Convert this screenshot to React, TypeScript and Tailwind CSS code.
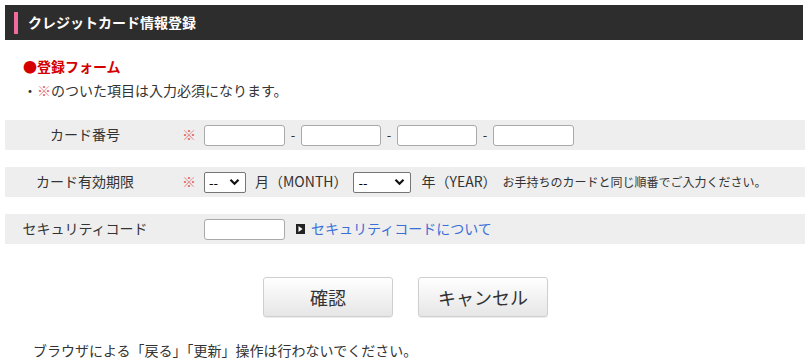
import React from "react";

const font = { fontFamily: '"Noto Sans CJK JP", "Noto Sans", sans-serif' };

function CardInput({ w = "w-[81px]" }: { w?: string }) {
  return (
    <input
      type="text"
      className={`${w} h-[21px] border border-[#a9a9a9] rounded-[3px] bg-white px-1 text-[13px] outline-none`}
    />
  );
}

function Dash() {
  return <span className="w-[16px] text-center text-[13px] text-[#333]">-</span>;
}

function Select({ w }: { w: string }) {
  return (
    <div
      className={`${w} h-[21px] border border-[#767676] rounded-[2px] bg-white flex items-center justify-between pl-[4px] pr-[5px]`}
    >
      <span className="text-[13px] leading-none text-black">--</span>
      <svg width="11" height="8" viewBox="0 0 11 8">
        <path d="M1.5 1.8 L5.5 5.8 L9.5 1.8" fill="none" stroke="#111" strokeWidth="2.2" />
      </svg>
    </div>
  );
}

function Row({ label, required, children }: { label: string; required?: boolean; children: React.ReactNode }) {
  return (
    <div className="flex items-center h-[30px] bg-[#eeeeee] text-[14px] text-[#333]">
      <div className="w-[160px] text-center">{label}</div>
      <div className="w-[39px] pl-[17px] text-[#e06666]">{required ? "※" : ""}</div>
      <div className="flex items-center">{children}</div>
    </div>
  );
}

export default function App() {
  return (
    <div className="w-[806px] h-[364px] bg-white p-[5px] pr-[3px] leading-[1.4]" style={font}>
      <header className="h-[35px] bg-[#2d2d2d] flex items-center pl-[9px]">
        <span className="w-[4px] h-[22px] bg-[#f06ba0]" />
        <h1 className="ml-[10px] text-[14px] font-bold text-white">クレジットカード情報登録</h1>
      </header>

      <div className="pl-[18px] pt-[17px]">
        <div className="text-[14px] font-bold text-[#d40000]">●登録フォーム</div>
        <div className="mt-[4px] text-[14px] text-[#333]">
          ・<span className="text-[#e06666]">※</span>のついた項目は入力必須になります。
        </div>
      </div>

      <div className="mt-[20px] flex flex-col gap-[17px] w-[800px]">
        <Row label="カード番号" required>
          <CardInput />
          <Dash />
          <CardInput w="w-[80px]" />
          <Dash />
          <CardInput w="w-[80px]" />
          <Dash />
          <CardInput />
        </Row>
        <Row label="カード有効期限" required>
          <Select w="w-[42px]" />
          <span className="ml-[9px]">月（MONTH）</span>
          <div className="ml-[6px]">
            <Select w="w-[58px]" />
          </div>
          <span className="ml-[10px]">年（YEAR）</span>
          <span className="ml-[6px] text-[12px]">お手持ちのカードと同じ順番でご入力ください。</span>
        </Row>
        <Row label="セキュリティコード">
          <CardInput />
          <span className="ml-[11px] w-[9px] h-[10px] bg-[#222] flex items-center justify-center">
            <svg width="5" height="6" viewBox="0 0 5 6">
              <path d="M0.5 0 L4.5 3 L0.5 6 Z" fill="#fff" />
            </svg>
          </span>
          <a href="#" className="ml-[6px] text-[#3a6fd8]">セキュリティコードについて</a>
        </Row>
      </div>

      <div className="mt-[33px] flex gap-[25px] pl-[258px]">
        <button className="w-[130px] h-[40px] border border-[#cfcfcf] rounded-[3px] bg-gradient-to-b from-white to-[#e6e6e6] text-[18px] text-[#333] shadow-[0_1px_1px_rgba(0,0,0,0.08)]">
          確認
        </button>
        <button className="w-[130px] h-[40px] border border-[#cfcfcf] rounded-[3px] bg-gradient-to-b from-white to-[#e6e6e6] text-[18px] text-[#333] shadow-[0_1px_1px_rgba(0,0,0,0.08)]">
          キャンセル
        </button>
      </div>

      <p className="mt-[24px] pl-[28px] text-[14px] text-[#333]">
        ブラウザによる「戻る」「更新」操作は行わないでください。
      </p>
    </div>
  );
}
